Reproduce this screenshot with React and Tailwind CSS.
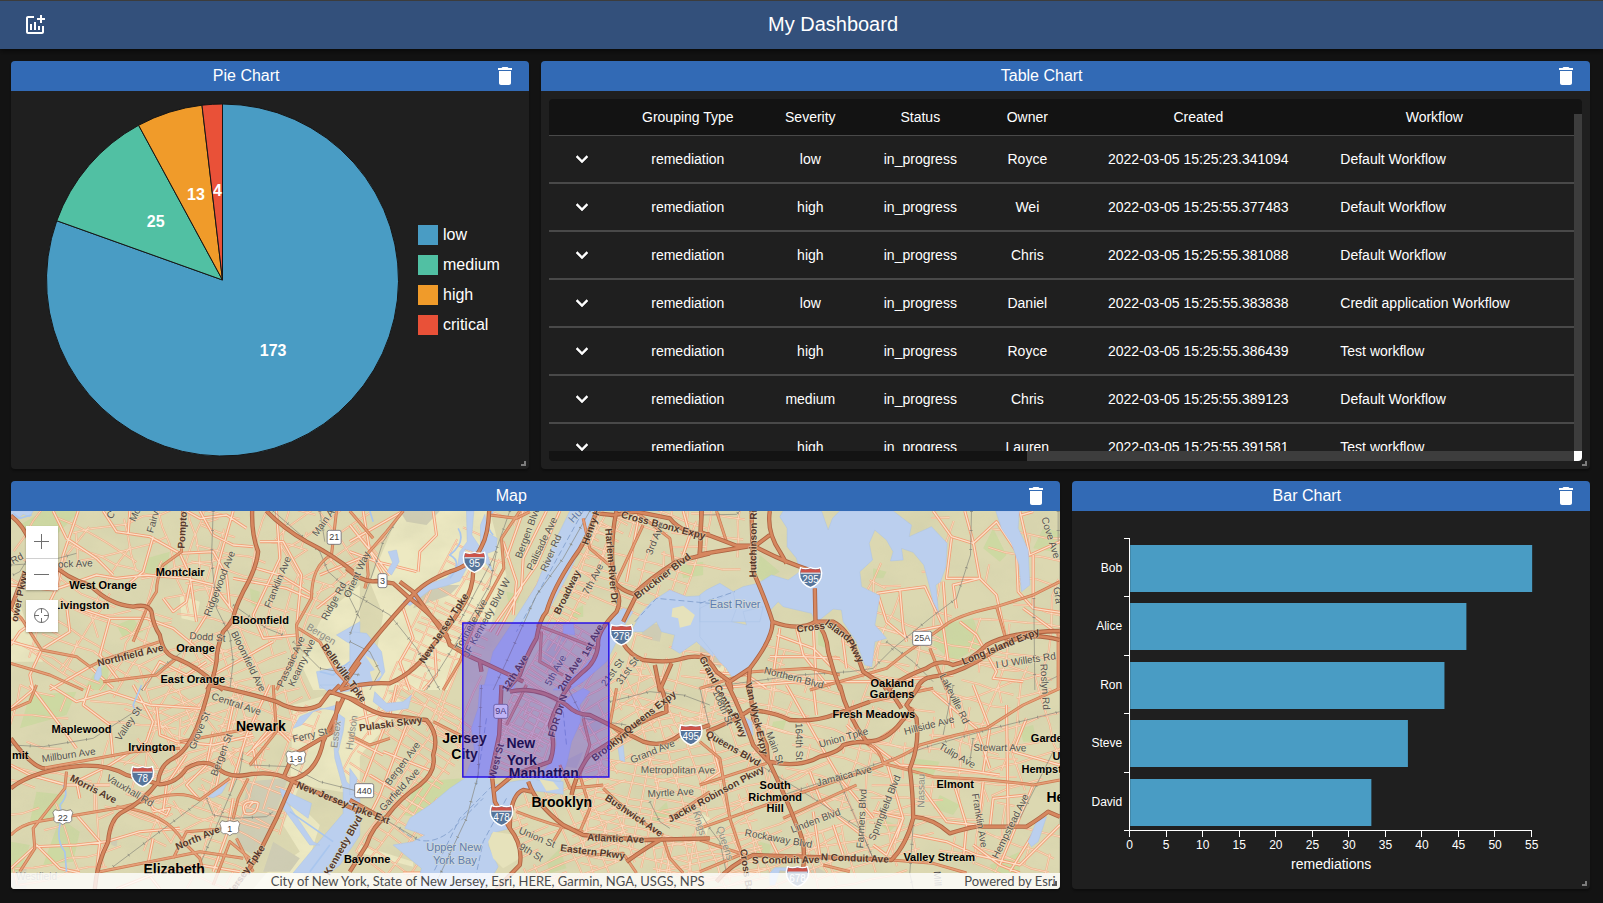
import React from "react";
import { MdAddchart, MdDelete } from "react-icons/md";

/* ---------- shared panel ---------- */

function Panel({ title, className, children, darkHandle }) {
  return (
    <section className={`relative flex min-w-0 flex-col overflow-hidden rounded bg-[#1f1f1f] text-white shadow-[0_2px_2px_rgba(0,0,0,0.3)] ${className || ""}`}>
      <header className="flex h-[30px] items-center bg-[#326ab5]">
        <h2 className="flex-1 text-center text-base leading-6">{title}</h2>
        <button type="button" aria-label={`Delete ${title}`} className="flex w-12 justify-center">
          <MdDelete size={24} />
        </button>
      </header>
      <div className="relative h-[378px]">{children}</div>
      <span
        className={`absolute right-[3px] bottom-[3px] h-[5px] w-[5px] border-r-2 border-b-2 ${darkHandle ? "border-[#5a5a5a]" : "border-[#7c7c7c]"}`}
      />
    </section>
  );
}

/* ---------- pie ---------- */

const SLICES = [
  { name: "low", value: 173, color: "#499cc4", swatch: "bg-[#499cc4]" },
  { name: "medium", value: 25, color: "#51c0a3", swatch: "bg-[#51c0a3]" },
  { name: "high", value: 13, color: "#f09b2a", swatch: "bg-[#f09b2a]" },
  { name: "critical", value: 4, color: "#e95138", swatch: "bg-[#e95138]" },
];

function PieChart() {
  const total = SLICES.reduce((s, d) => s + d.value, 0);
  const r = 176;
  let acc = 0;
  const arcs = SLICES.map((s) => {
    const a0 = (acc / total) * Math.PI * 2;
    acc += s.value;
    const a1 = (acc / total) * Math.PI * 2;
    const mid = (a0 + a1) / 2;
    const pt = (a, k) => [176.5 + Math.sin(a) * k, 177 - Math.cos(a) * k];
    const [x0, y0] = pt(a0, r);
    const [x1, y1] = pt(a1, r);
    const [tx, ty] = pt(mid, r / 2);
    return { ...s, d: `M176.5 177L${x0} ${y0}A${r} ${r} 0 ${a1 - a0 > Math.PI ? 1 : 0} 1 ${x1} ${y1}Z`, tx, ty };
  });
  return (
    <div className="flex h-full items-center gap-[18px] pl-[35px]">
      <svg viewBox="0 0 354 354" className="h-[354px] w-[354px] shrink-0" role="img" aria-label="Severity pie chart">
        {arcs.map((a) => (
          <path key={a.name} d={a.d} fill={a.color} stroke="#161616" strokeWidth="1" />
        ))}
        {arcs.map((a) => (
          <text key={a.name} x={a.tx} y={a.ty + 4} textAnchor="middle" className="fill-white text-base font-bold">
            {a.value}
          </text>
        ))}
      </svg>
      <ul className="flex flex-col gap-2.5">
        {SLICES.map((s) => (
          <li key={s.name} className="flex h-5 items-center gap-[5px] text-base leading-5">
            <span className={`h-5 w-5 ${s.swatch}`} />
            {s.name}
          </li>
        ))}
      </ul>
    </div>
  );
}

/* ---------- table ---------- */

const ROWS = [
  ["low", "Royce", "2022-03-05 15:25:23.341094", "Default Workflow"],
  ["high", "Wei", "2022-03-05 15:25:55.377483", "Default Workflow"],
  ["high", "Chris", "2022-03-05 15:25:55.381088", "Default Workflow"],
  ["low", "Daniel", "2022-03-05 15:25:55.383838", "Credit application Workflow"],
  ["high", "Royce", "2022-03-05 15:25:55.386439", "Test workflow"],
  ["medium", "Chris", "2022-03-05 15:25:55.389123", "Default Workflow"],
  ["high", "Lauren", "2022-03-05 15:25:55.391581", "Test workflow"],
];

function ChevronDown() {
  return (
    <svg width="24" height="24" viewBox="0 0 24 24" fill="currentColor" stroke="currentColor" strokeWidth="0.5">
      <path d="M16.59 8.590L12 13.170 7.410 8.590 6 10l6 6 6-6z" />
    </svg>
  );
}

function TableChart() {
  return (
    <div className="h-full p-2">
      <div className="flex h-full flex-col overflow-hidden rounded">
        <div className="flex min-h-0 flex-1">
          <div className="min-w-0 flex-1 overflow-hidden">
            <table className="w-full table-fixed border-separate border-spacing-0 text-center text-sm leading-5">
              <colgroup>
                <col className="w-[66px]" />
                <col className="w-[145px]" />
                <col className="w-[100px]" />
                <col className="w-[120px]" />
                <col className="w-[94px]" />
                <col className="w-[248px]" />
                <col className="w-[224px]" />
                <col />
              </colgroup>
              <thead>
                <tr className="h-[37px] bg-[#131313]">
                  {["", "Grouping Type", "Severity", "Status", "Owner", "Created", "Workflow", ""].map((h, i) => (
                    <th key={i} className="border-b border-[#494949] p-0 font-normal">{h}</th>
                  ))}
                </tr>
              </thead>
              <tbody>
                {ROWS.map(([sev, owner, created, wf]) => (
                  <tr key={created} className="h-12 [&>td]:border-b-2 [&>td]:border-[#494949] [&>td]:p-0">
                    <td>
                      <button type="button" aria-label="Expand row" className="mx-auto block">
                        <ChevronDown />
                      </button>
                    </td>
                    <td>remediation</td>
                    <td>{sev}</td>
                    <td>in_progress</td>
                    <td>{owner}</td>
                    <td>{created}</td>
                    <td className="text-left"><span className="pl-[18px]">{wf}</span></td>
                    <td />
                  </tr>
                ))}
              </tbody>
            </table>
          </div>
          <div className="w-2 bg-[#131313] pt-[15px]">
            <div className="h-full bg-[#3d3d3d]" />
          </div>
        </div>
        <div className="flex h-2.5 bg-[#131313]">
          <div className="w-[478px]" />
          <div className="flex-1 bg-[#3d3d3d]" />
          <div className="w-2 bg-white" />
        </div>
      </div>
    </div>
  );
}

/* ---------- bars ---------- */

const BARS = [["Bob", 55], ["Alice", 46], ["Ron", 43], ["Steve", 38], ["David", 33]];

function BarChart() {
  const x0 = 58, y0 = 27, w = 402, step = 58.4;
  const ticks = Array.from({ length: 12 }, (_, i) => i * 5);
  return (
    <svg viewBox="0 0 518 378" className="block h-full w-full" role="img" aria-label="Remediations by owner">
      {BARS.map(([name, v], i) => (
        <g key={name}>
          <rect x={x0} y={Math.round(y0 + i * step + 7)} width={(v / 55) * w} height="47" fill="#499cc4" />
          <text x={x0 - 8} y={Math.round(y0 + i * step + 34)} textAnchor="end" className="fill-white text-xs">{name}</text>
        </g>
      ))}
      <g stroke="#ffffff" fill="none" strokeWidth="1" shapeRendering="crispEdges">
        <path d={`M${x0 - 0.5} ${y0}V${y0 + 293}`} />
        {[0, 1, 2, 3, 4, 5].map((i) => (
          <path key={i} d={`M${x0 - 6} ${Math.round(y0 + i * step) + 0.5}H${x0}`} />
        ))}
        <path d={`M${x0 - 1} ${y0 + 292.5}H${x0 + w}`} />
        {ticks.map((t) => (
          <path key={t} d={`M${Math.round(x0 + (t / 55) * w) - 0.5} ${y0 + 292}v7`} />
        ))}
      </g>
      {ticks.map((t) => (
        <text key={t} x={x0 - 0.5 + (t / 55) * w} y="338" textAnchor="middle" className="fill-white text-xs">{t}</text>
      ))}
      <text x={x0 + w / 2} y="358" textAnchor="middle" className="fill-white text-sm">remediations</text>
    </svg>
  );
}

/* ---------- map ---------- */

/* The map is stored as six sheets drawn at triple scale; ORIGIN places each one. */
const ORIGIN = { a: [-11, -36], b: [339, -36], c: [689, -36], d: [-11, 174], e: [339, 174], f: [689, 174] };

const LOWLAND = {
  b: ["M150 108H420L470 300L420 460L340 540L300 645H60L100 420L60 320Z", "M160 520L260 560L240 645H120Z"],
  a: ["M970 420L1080 330V645H940L900 560Z", "M33 300L90 480L130 560L33 560Z", "M540 360L600 380L590 440L545 430Z"],
  d: ["M880 60L1080 0V330L900 300L850 420L900 500L800 564L760 612L900 612L960 420L870 330Z"],
  e: ["M0 0H90L170 60L40 200L0 260Z", "M30 480L190 530L190 545L20 500Z"],
  f: ["M0 380L30 400L20 450L0 440Z"],
  c: ["M0 500L60 560L90 600L30 580L0 540Z"],
};

const PARKS = {
  a: ["M130 108H240L160 190L80 200L60 150Z", "M440 250L510 230L500 290L430 300Z", "M350 450L400 430L430 470L370 490Z", "M750 340L780 350L775 400L755 390Z", "M280 600L330 560L320 645H250Z"],
  b: ["M470 350L510 360L505 385L475 380Z", "M665 410L700 390L700 425L670 430Z", "M990 270L1060 260L1060 300L1000 310Z", "M820 400L850 390L830 430L810 430Z"],
  c: ["M180 240L240 290L190 320L170 300Z", "M880 160L920 240L900 260L850 220Z", "M355 470L370 460L380 520L355 510Z", "M1030 160L1080 170L1060 230L1000 220Z", "M520 280L560 290L550 310L520 310Z", "M720 450L820 430L850 510L760 560L700 510Z"],
  d: ["M90 30L230 20L200 90L60 130Z", "M110 320L200 330L170 400L90 410Z", "M180 400L240 440L220 530L130 540Z", "M33 470L90 480L60 560H33Z"],
  e: ["M200 290L340 280L220 400L160 390Z", "M590 530L630 490L650 550L600 564Z", "M900 400L950 350L960 390L920 410Z"],
  f: ["M640 220L720 230L700 270L640 270Z", "M720 330L780 360L760 390L700 370Z", "M960 130L1000 120L1010 170L970 170Z", "M540 400L590 420L570 440L540 420Z", "M180 470L215 480L200 530L165 510Z", "M870 540L960 500L960 564L880 564Z", "M220 110L260 105L250 135L215 130Z"],
};

const GRAYS = {
  d: ["M745 290L865 278L780 520L705 480Z", "M33 570L80 545V612H33Z", "M820 470L900 520L870 560L790 560Z", "M330 460L355 455L350 485L335 480Z"],
  b: ["M150 108H270L230 150L170 140Z", "M600 490L640 510L620 570L575 560Z", "M625 475L655 480L650 505L625 495Z", "M870 440L940 450L930 500L880 490Z", "M220 330L330 330L300 360L190 400Z"],
  e: ["M680 90L760 110L740 150L700 140Z", "M620 240L700 200L680 250Z"],
  c: ["M0 510L70 560L60 580L0 540Z"],
  f: ["M200 560L350 545L380 564H210Z"],
};

const WATER = {
  a: ["M33 108H100L90 125L70 118L55 130L33 120Z", "M1010 480L1080 440V520L1040 500Z", "M950 590L1080 560V620L1040 640L960 640Z", "M285 600L302 562L305 600L295 618L283 612Z"],
  b: [
    "M660 108H735L700 200L660 290L600 400L570 440L530 540L490 645H400L430 530L490 440L560 330L600 230Z",
    "M0 470L50 475L95 530L105 590L80 630L0 640Z",
    "M350 108H372L366 180L390 215L378 232L345 222L350 280L330 318L290 332L240 345L180 392L160 380L215 335L290 308L322 280L330 230L352 200Z",
    "M405 118L415 175L442 190L440 225L412 235L428 290L405 260L392 220L392 150Z",
    "M115 230L140 225L148 260L125 300L112 290L128 262Z",
    "M790 425L820 400L850 410L830 440L800 500L770 560L700 620L660 645H610L690 590L740 530L755 470Z",
    "M845 470L870 420L905 380L960 345L1010 365L1090 360V545L1040 500L990 535L965 520L975 480L935 470L920 440L880 470Z",
    "M640 450L670 445L675 480L640 475Z",
  ],
  c: [
    "M0 360L20 345L60 325L100 350L130 335L175 325L215 300L265 315L300 290L290 250L262 215L262 160L240 125L250 108H365L385 165L398 130L420 108H580L635 150L628 185L695 155L742 205L738 275L722 320L708 330L716 412L700 380L688 330L672 270L640 232L605 220L610 255L572 258L580 230L560 195L525 165L508 205L518 255L480 290L485 335L540 362L525 450L560 490L525 500L516 575L495 570L470 500L430 440L425 405L400 402L350 442L335 415L250 395L235 380L212 405L222 440L190 520L150 570L100 612L80 580L60 560L0 485Z",
    "M888 108H958L955 160L985 225L990 330L965 350L958 270L935 205L905 160Z",
    "M0 400L100 350L110 400L95 440L140 450L130 410L190 395L180 440H0Z",
  ],
  d: ["M1010 60L940 80L905 120L880 130L900 95L960 70L1000 75L1035 100L1030 140L1015 200L1040 290L1080 330V450L1020 540L990 564H880L970 455L1030 385L1030 310L1005 220L1000 150Z", "M960 0L1080 0L1075 15L990 25Z", "M840 310L935 355L925 400L850 345Z", "M625 335L685 290L665 325L640 338Z", "M860 350L940 470L960 480L930 480L850 370Z"],
  e: [
    "M390 0H458L446 150L425 260L432 300L500 288L560 280L640 290L640 328L560 318L520 320L492 350L480 430L425 445L415 480L445 545L405 612H200L215 550L130 480L190 470L225 450L165 430L180 400L240 360L300 310L345 280L375 200L365 130L385 70Z",
    "M665 30L700 10L720 20L690 60L692 110L665 170L652 230L632 290L560 285L600 235L620 180L615 120L632 60Z",
    "M75 20L110 55L160 50L185 30L175 70L110 80L70 50Z",
    "M0 250L22 280L15 325L0 330Z",
    "M805 190L820 180L825 230L810 225Z",
  ],
  f: ["M133 95L155 110L160 150L140 150L130 120Z", "M985 470L1010 410L1040 395L1015 470L995 485Z", "M210 564L225 548L285 548L290 560L240 556L225 600H210Z"],
};

const ISLES = {
  b: ["M968 400L1000 392L1035 420L1022 450L990 458L985 430L965 425Z", "M45 540L80 560L95 600L70 625L60 590L75 585Z"],
  e: ["M415 470L430 440L500 450L510 520L460 550L430 520Z", "M568 282L610 290L628 312L590 318Z"],
};

const STREAMS = {
  d: ["M190 300Q210 330 180 360Q190 390 180 420Q170 470 195 500L200 560", "M425 0L400 60L410 90", "M870 380L1000 470M930 560L990 480"],
  b: ["M325 160Q350 200 300 240Q340 260 300 310", "M430 108Q400 150 430 180", "M60 108L70 140"],
  a: ["M40 115L60 130L95 120", "M960 590L1000 600L1050 560"],
};

const RAILS = {
  a: ["M33 270L120 265L230 235", "M640 108L635 250L650 400L690 480L700 560L690 645", "M820 108L960 230L985 290L1030 330L1080 430", "M700 390L800 460L850 480", "M960 108L975 200", "M40 300L60 290L85 250", "M425 645L470 590L560 520", "M880 500L960 580L1080 600"],
  b: ["M720 108L640 250L560 360L470 560L430 645", "M0 350L120 420L200 520L270 645", "M160 108L100 200L60 320L0 480", "M440 230L420 330L340 470L230 645", "M480 108L430 250L330 440", "M0 500L60 530L90 590L60 645"],
  c: ["M815 108L812 240L770 370L690 430L580 520L520 580L450 590L300 600L0 640", "M1075 108V200M1002 370L1005 645", "M560 500L640 560L700 620", "M1040 620L1080 600", "M0 120L110 118L150 80"],
  d: ["M33 180L130 185L280 160L420 70", "M340 545L480 440L600 350", "M600 540L660 400L720 260L730 200", "M750 240L870 245L960 290L1080 320", "M620 340L640 390L700 400L800 395L820 380"],
  e: ["M250 612L350 400L385 270L395 0", "M100 400L200 460", "M780 50L900 20L1000 30L1080 60", "M650 0L700 100L830 120", "M900 350L930 410L960 430"],
  f: ["M0 10L30 130L60 160L180 240L340 340L480 430L520 520", "M250 330L520 240L700 180L880 130L1080 80", "M410 270L450 360L520 520", "M640 420L630 564L640 612", "M760 0L730 150", "M0 380L30 430L60 470L80 564", "M1060 200L960 400", "M820 160L810 230"],
};

const MINOR = {
  a: ["M33 330L160 345L290 300L350 310L440 300L560 310L640 330L700 410", "M235 108L190 240L170 340L130 420L60 470L33 510", "M310 108L350 170L450 185L540 235L570 300L590 440", "M390 108L385 175", "M600 108L640 180L700 210L760 215", "M460 185L430 290L370 340", "M540 235L640 230L680 300L690 400", "M130 520L210 470L200 390L240 400L330 430L440 430L520 460L640 560", "M33 500L125 525L90 600L100 645", "M160 108L200 190L290 250L340 300", "M490 370L520 410L560 380L570 330", "M770 280L840 300L940 360", "M780 200L850 200L905 300L890 460", "M830 108L840 250L760 420L790 490L890 480", "M640 600L820 500", "M560 108L600 130L680 120L740 160", "M620 560L560 600L480 560L430 645", "M700 108L660 250L620 420L570 500", "M150 645L270 575L340 640", "M700 310L860 340L930 370", "M960 300L1080 250M950 400L1050 320", "M330 430L300 540L360 620"],
  b: ["M0 150L120 300M0 230L80 260L200 290", "M250 108L260 180L210 230L205 290", "M160 108L0 200", "M40 108L60 230L100 300", "M460 200L500 320L490 420", "M520 108L470 250", "M590 108L520 250L515 340L440 480", "M630 108L560 270L420 470", "M160 400L190 490L150 560L180 645", "M255 520L260 600L220 645", "M1000 108L1020 180L1000 240", "M870 108L830 320"],
  c: ["M700 108L755 185L820 205L890 140L950 230L955 350L1000 400L1080 412", "M795 108L820 200L840 310L890 360L920 500", "M755 190L740 310L840 310L760 330L770 400", "M530 355L600 345L675 335L730 455L745 560", "M600 345L610 460L620 500M535 360L560 440L620 490", "M115 460L210 460M115 460V545L170 560M115 490L215 490", "M210 545L310 545L420 550M240 460L220 600M290 460L310 540L390 640M340 450L350 640M230 480L340 520L400 580", "M425 460L440 580M960 108L990 240L1080 200M1000 240V400M965 120L1000 110", "M780 440L830 480L890 590L880 610L970 620", "M730 320L740 450L640 470", "M970 400L1080 480", "M33 640L300 620L550 620L760 600M0 590L140 600L200 640"],
  d: ["M33 70L105 10M90 0L180 120L230 190M270 0L250 60L330 120L340 220", "M150 0L230 50L330 20L450 60L600 70", "M400 0L460 110L440 170L330 240L230 290L240 340", "M470 60L480 150L530 170L640 180L760 150", "M33 240L90 270L200 300L330 300", "M105 485L230 480L320 470L420 440L540 430", "M33 550L110 480L180 550L240 564", "M230 390L300 470L290 560M460 460L440 560L480 612", "M350 612L480 560L600 540L720 560", "M490 380L500 300L560 210", "M600 345L560 300L620 240L640 140", "M650 300L700 60M690 320L740 150L810 0M740 210L830 130L870 170", "M700 340L680 450L640 560M770 250L760 190L810 130", "M760 350Q720 350 735 385Q770 395 775 355Q760 345 748 365", "M460 380L510 370L500 390L460 370L440 330"],
  e: ["M0 110L100 80M30 0L60 150M140 0L120 90M110 110L40 290M170 120L90 330L60 390", "M100 200L250 260M60 270L160 330M0 160L100 210", "M160 564L400 564"],
  f: ["M30 150L60 260L0 300M260 0L350 160L420 280L520 400M340 0L350 90", "M330 260L360 340L420 400L500 460M440 120L560 230L610 400L590 460", "M700 20L830 130L870 250M740 0L760 130M820 0L870 130L850 260M600 120L540 160", "M520 180L600 240L760 250L900 270M660 300L740 410L830 420", "M760 290L800 420L790 530M850 290L835 420M920 60L925 420M1000 300L900 540", "M820 480L900 540L960 564M640 450L740 470L830 510L960 540L1080 420", "M520 380L610 400L560 510L520 480", "M870 430L880 340L980 330M930 560L1010 430M980 100L940 200L1080 240", "M200 440L240 520M340 380L360 510M400 420L430 510"],
};

const MEDIUM = {
  a: ["M548 108L545 230L490 270Q470 310 470 350L445 390L400 500", "M33 400L65 430L125 525L230 545L270 575L310 555L480 500", "M1010 108L995 240Q935 270 935 370L890 450L895 520L830 645", "M895 460L960 500L1010 590L1060 645", "M33 565L150 600L250 645", "M310 620L470 600L530 550"],
  b: ["M160 108L110 170L50 240L55 300L45 340", "M510 108L455 190L462 280L380 430L330 560L280 645", "M420 120L500 130L540 110", "M855 108L960 190L970 260", "M700 130L720 220L790 280", "M880 150L800 320", "M560 450L640 480L740 520", "M575 470L570 560L640 600", "M0 108L70 190"],
  c: ["M330 645L560 580L610 540L730 455Q770 420 890 395L1000 360L1080 320", "M890 395L920 500", "M0 640L160 590L330 580L420 600", "M50 108L80 200", "M1075 470V645", "M690 520L740 645"],
  d: ["M33 450Q60 420 110 410L350 370L430 350Q540 310 600 345L690 280", "M200 260L195 310L100 430L105 490L60 560", "M350 365Q500 380 550 470L600 520L610 560", "M130 250L400 200L540 190", "M540 170L700 140L750 130", "M300 560L600 500L730 520", "M700 400L715 340L745 280", "M640 600L690 470L750 520", "M110 0L90 50L33 75", "M520 520L560 440L690 430", "M710 460L760 560", "M820 0L830 140L750 240"],
  e: ["M0 150L60 180L120 160M250 110L370 170", "M500 380Q600 420 700 440", "M530 0L470 120M640 420L610 470", "M760 310Q850 400 940 450", "M650 490L720 510L820 505L860 564", "M700 100L720 180L690 270L720 370L690 440", "M940 460L960 520L1000 564", "M960 400L1080 320", "M800 10L780 120L830 160", "M630 240L660 310L760 300"],
  f: ["M500 175Q540 190 550 235L700 275Q850 280 1000 300L1080 285", "M550 235Q620 210 660 180Q760 150 860 130L970 60L1080 10", "M575 525L700 535L800 564", "M0 430L240 345L550 240", "M0 560L120 510M0 465L150 515", "M0 170L60 220L90 400L130 520", "M0 300L200 235", "M370 540L450 560M250 400L470 300", "M510 50L700 10"],
};

const MAJOR = {
  a: ["M33 122Q70 150 90 200L150 260Q200 310 270 330Q330 390 400 395Q445 385 455 410Q460 450 480 480Q490 540 530 550Q600 580 650 630L670 645", "M757 108Q755 180 775 230Q770 280 730 350Q705 400 700 430Q690 450 670 470Q650 520 650 560Q640 620 622 645", "M800 108Q850 160 920 200Q1000 240 1060 290", "M33 400L75 290", "M1080 560L1020 645"],
  b: ["M418 108Q415 180 395 215Q370 270 300 290Q220 320 180 370Q60 500 0 590", "M370 290Q370 340 340 390Q290 470 250 510Q200 590 120 625Q40 620 -30 645", "M-10 280Q40 325 80 318L130 325L180 370Q260 430 290 480L300 510L350 540Q440 580 520 620", "M150 320L190 350L300 500", "M740 108Q710 200 670 250Q610 340 590 410Q570 430 560 490Q530 540 510 600L470 645", "M800 108Q780 200 790 300Q790 340 860 360L820 440", "M790 330Q820 370 800 410Q740 470 745 510Q740 560 700 590L640 645", "M850 360Q900 310 980 260L1080 235", "M740 115L790 120L860 110L960 130Q1000 180 1080 178", "M1055 108L1050 240", "M820 505Q840 540 880 555Q960 565 1000 550Q1030 540 1080 550", "M915 570L930 645L965 565", "M390 560L395 590"],
  c: ["M0 238L170 210L210 180", "M0 170L110 212L160 212Q250 260 330 285", "M210 108Q200 170 240 230L260 265", "M5 108L0 240", "M155 108L160 290Q200 380 218 440Q220 490 150 580L145 645", "M345 340L347 440Q300 470 218 440", "M347 440L400 440Q440 460 465 520L490 590L520 610Q550 620 560 645", "M347 440Q380 470 385 530Q400 590 422 645", "M570 640Q600 610 680 580Q720 550 760 570Q810 560 860 510Q930 470 1080 468", "M650 645Q660 610 700 605Q760 600 830 560L930 500Q990 470 1080 495", "M0 540Q30 555 50 590L90 620L150 580", "M90 620L95 645"],
  d: ["M33 310Q100 255 250 242Q330 240 380 270L480 298Q530 295 560 250Q610 220 650 245Q680 280 740 270Q820 255 870 285Q950 270 970 170L1030 40", "M1000 20L1020 0", "M630 0Q610 80 590 130Q560 200 520 220Q480 240 475 290Q430 350 370 380Q330 400 325 470Q290 540 285 612", "M880 285L830 400L770 520L730 575L700 612", "M33 160Q100 250 135 250", "M630 0Q730 20 830 50Q900 90 960 60L990 20L1080 50", "M870 285L1080 380", "M850 280L880 210L1000 140L1015 50"],
  e: ["M0 40Q80 90 110 90L230 105Q270 150 250 210Q260 260 210 300Q150 340 110 395Q70 420 50 480L0 560", "M0 345L100 400", "M455 0L448 150L425 260L435 350L480 430Q520 480 510 540L440 612", "M480 430Q480 330 520 315L545 320", "M660 0Q620 50 600 120Q620 180 600 230L490 270L430 320", "M480 20Q560 0 650 60Q680 90 720 90Q800 130 880 170Q940 190 990 150L1080 120", "M535 290Q560 360 640 420L700 450L880 465L1080 460", "M665 330Q680 260 720 210L800 160Q860 110 950 80Q950 40 930 0", "M830 530Q900 480 940 460"],
  f: ["M20 140Q100 110 150 75Q220 80 270 105Q350 110 400 90L510 50", "M80 -10Q130 90 160 180L210 235Q260 340 290 420Q320 470 310 550", "M150 0L160 100L200 180L205 230", "M420 0Q440 90 500 170Q560 170 605 110L640 70", "M205 230Q300 250 360 215Q420 200 430 180Q480 165 510 175", "M560 0L605 70M660 0L620 60L650 100Q660 180 630 250Q640 330 640 400Q620 480 575 525L480 520L310 515L160 510Q90 540 50 590", "M640 395Q700 400 750 445Q800 430 830 425L980 425Q1020 400 1045 380L1080 395"],
};

const FERRY = {
  b: ["M800 500L920 370L1080 385", "M700 108L600 290L500 470"],
  c: ["M0 385L105 350"],
  e: ["M150 430Q220 500 300 440L400 340", "M430 300L330 400L250 564", "M470 340L400 470L380 564", "M410 100L380 300", "M640 80L650 180"],
};

/* Street grids: centre, extent, bearing, spacing */
const GRIDS = [
  [60, 90, 130, 150, 25, 26], [150, 60, 150, 120, -15, 22], [240, 60, 120, 140, 15, 17], [130, 150, 200, 90, 28, 22],
  [220, 190, 150, 130, -20, 13], [80, 250, 170, 120, 12, 24], [180, 260, 110, 110, -30, 16], [245, 250, 90, 130, 20, 10],
  [60, 330, 120, 80, -12, 24], [180, 330, 150, 90, 22, 16], [330, 30, 100, 80, -35, 16], [300, 110, 50, 80, 20, 20],
  [465, 60, 60, 150, 25, 12], [430, 160, 80, 130, 22, 9], [560, 70, 60, 150, 28, 8], [545, 180, 70, 130, 32, 5], [515, 230, 60, 80, 22, 6],
  [630, 50, 110, 110, 18, 10], [700, 30, 80, 80, 5, 14], [620, 210, 100, 100, -28, 9], [660, 170, 90, 80, 12, 10],
  [560, 320, 110, 110, -22, 8], [640, 310, 120, 120, 12, 8], [700, 250, 120, 110, -14, 11], [750, 180, 110, 90, 14, 14],
  [780, 320, 160, 110, -24, 14], [820, 240, 150, 110, 16, 15], [880, 130, 90, 90, 25, 20], [910, 60, 70, 110, 10, 26],
  [930, 190, 150, 110, 14, 18], [940, 290, 160, 110, 4, 15], [1010, 100, 90, 150, 12, 22], [870, 340, 140, 70, -16, 14],
  [1010, 230, 90, 120, -18, 17], [400, 240, 90, 110, 33, 9], [395, 320, 60, 90, 34, 9], [700, 350, 110, 60, -10, 8], [1010, 345, 80, 60, 20, 15],
];

function gridPath() {
  let seed = 20220305;
  const rnd = () => {
    seed = (seed * 1664525 + 1013904223) % 4294967296;
    return seed / 4294967296;
  };
  let d = "";
  GRIDS.forEach(([cx, cy, w, h, deg, gap]) => {
    const c = Math.cos((deg * Math.PI) / 180);
    const s = Math.sin((deg * Math.PI) / 180);
    const put = (u, v) => `${(cx + u * c - v * s).toFixed(1)} ${(cy + u * s + v * c).toFixed(1)}`;
    [[w, h, false], [h, w, true]].forEach(([len, across, flip]) => {
      const spacing = flip ? gap * 1.7 : gap;
      for (let o = -across / 2; o < across / 2; o += spacing * (0.7 + rnd() * 0.7)) {
        let drawing = false;
        let drift = o;
        for (let t = -len / 2; t <= len / 2; t += 18) {
          drift += (rnd() - 0.5) * gap * 0.35;
          if (rnd() < 0.15) { drawing = false; continue; }
          d += `${drawing ? "L" : "M"}${flip ? put(drift, t) : put(t, drift)}`;
          drawing = true;
        }
      }
    });
  });
  return d;
}
const GRID_D = gridPath();

function Sheets({ data, ...attrs }) {
  return (
    <g {...attrs}>
      {Object.entries(data).map(([k, paths]) => (
        <path key={k} d={paths.join("")} transform={`translate(${ORIGIN[k][0]} ${ORIGIN[k][1]}) scale(0.33333)`} />
      ))}
    </g>
  );
}

const LABEL_STYLE = {
  s: "fill-[#55524f] text-[10px]",
  h: "fill-[#54372b] text-[10px] font-bold",
  g: "fill-[#8c8c84] text-[10px]",
  w: "fill-[#5d7cb4] text-[11px]",
  c: "fill-black text-[11px] font-bold",
  C: "fill-black text-sm font-bold",
};

/* sheet, style, text, start point, end point */
const STREETS = [
  ["a", "s", "Rd", 35, 257, 65, 240], ["a", "s", "ock Ave", 175, 266, 277, 262], ["a", "s", "C", 322, 128, 340, 108], ["a", "s", "Mo", 395, 135, 412, 100],
  ["a", "s", "Fairv", 448, 172, 466, 108], ["a", "h", "Pompto", 542, 222, 549, 108], ["a", "s", "Ridgewood Ave", 618, 425, 696, 225],
  ["a", "s", "Franklin Ave", 798, 402, 865, 240], ["a", "s", "Main A", 942, 178, 995, 105], ["a", "s", "Ridge Rd", 970, 432, 1030, 322],
  ["a", "s", "Orient Way", 1038, 366, 1100, 230], ["a", "s", "Dodd St", 568, 480, 678, 488], ["a", "s", "Bloomfield Ave", 700, 462, 795, 655],
  ["a", "h", "Northfield Ave", 297, 562, 485, 516], ["a", "s", "Passaic Ave", 836, 638, 907, 480], ["a", "s", "Kearny Ave", 870, 635, 937, 490],
  ["a", "g", "Bergen", 922, 450, 1008, 502], ["a", "h", "Belleville Tpke", 978, 515, 1090, 670], ["a", "h", "ower Pkwy", 42, 437, 72, 290],
  ["b", "s", "Bergen Blvd", 503, 248, 560, 95], ["b", "s", "Palisade Ave", 535, 285, 613, 125], ["b", "s", "River Rd", 578, 288, 625, 178],
  ["b", "w", "Hu", 660, 138, 690, 105], ["b", "h", "Henry H", 705, 202, 740, 105], ["b", "h", "Harlem River Dr", 778, 165, 797, 382],
  ["b", "s", "7th Ave", 703, 357, 752, 265], ["b", "h", "Broadway", 620, 412, 680, 290], ["b", "h", "Cross Bronx Expy", 822, 118, 1060, 180],
  ["b", "s", "3rd Ave", 893, 240, 935, 140], ["b", "h", "Bruckner Blvd", 858, 362, 1015, 242], ["b", "h", "New Jersey Tpke", 215, 557, 345, 360],
  ["b", "s", "Tonnelle Ave", 318, 527, 405, 370], ["b", "s", "JF Kennedy Blvd W", 345, 542, 472, 310], ["b", "h", "12th Ave", 463, 643, 525, 543],
  ["b", "s", "5th Ave", 590, 630, 640, 540], ["b", "h", "2nd Ave", 630, 643, 687, 548], ["b", "h", "1st Ave", 702, 540, 750, 450],
  ["b", "s", "21st St", 757, 632, 815, 550], ["b", "s", "31st St", 802, 627, 860, 545],
  ["c", "h", "Hutchinson Ri", 157, 306, 159, 106], ["c", "w", "East River", 25, 386, 187, 386], ["c", "h", "Cross", 293, 460, 372, 450],
  ["c", "h", "Island", 380, 438, 450, 490], ["c", "h", "Pkwy", 450, 492, 486, 560], ["c", "s", "Northern Blvd", 190, 582, 375, 630],
  ["c", "s", "Cove Ave", 1035, 125, 1074, 250], ["c", "s", "Gra", 1072, 335, 1080, 385], ["c", "h", "Long Island Expy", 793, 556, 1010, 468],
  ["c", "s", "I U Willets Rd", 885, 568, 1070, 540], ["c", "s", "Roslyn Rd", 1033, 565, 1042, 705], ["c", "s", "Lakeville Rd", 728, 595, 803, 745],
  ["c", "h", "Grand Central", 10, 548, 100, 718], ["f", "h", "Pkwy", 105, 85, 135, 155], ["f", "h", "Van Wyck Expy", 148, -5, 197, 205],
  ["d", "s", "Central Ave", 635, 30, 785, 80], ["d", "s", "Grove St", 573, 192, 620, 80], ["d", "s", "Valley St", 348, 167, 420, 62],
  ["d", "s", "Millburn Ave", 122, 220, 290, 196], ["d", "s", "Bergen St", 638, 275, 688, 142], ["d", "s", "Ferry St", 875, 162, 985, 135],
  ["d", "g", "Essex", 1000, 190, 1012, 105], ["d", "g", "Hudson", 1045, 195, 1062, 90], ["d", "h", "Morris Ave", 213, 275, 350, 345],
  ["d", "s", "Vauxhall Rd", 325, 275, 458, 355], ["d", "h", "North Ave", 533, 482, 652, 432], ["d", "h", "New Jersey Tpke Ext", 897, 298, 1165, 405],
  ["d", "h", "Kennedy Blvd", 980, 565, 1077, 395], ["d", "h", "Jersey Tpke", 690, 622, 785, 485], ["d", "g", "Westfield", 37, 573, 183, 573],
  ["e", "h", "Pulaski Skwy", 32, 126, 212, 103], ["e", "s", "Bergen Ave", 106, 302, 207, 167], ["e", "s", "Garfield Ave", 88, 377, 207, 248],
  ["e", "h", "West St", 425, 277, 450, 180], ["e", "h", "FDR Dr N", 603, 152, 640, 32], ["e", "h", "Brooklyn", 728, 220, 830, 142],
  ["e", "h", "Queens Expy", 833, 132, 965, 28], ["e", "s", "Grand Ave", 840, 225, 975, 170], ["e", "s", "Metropolitan Ave", 867, 252, 1102, 254],
  ["e", "s", "Myrtle Ave", 888, 325, 1037, 317], ["e", "h", "Bushwick Ave", 772, 335, 935, 445], ["e", "h", "Jackie Robinson Pkwy", 960, 400, 1235, 250],
  ["e", "g", "Kings", 1040, 378, 1062, 450], ["e", "h", "Atlantic Ave", 715, 455, 880, 462], ["e", "h", "Eastern Pkwy", 638, 487, 820, 510],
  ["e", "s", "Union St", 508, 432, 617, 478], ["e", "s", "9th St", 508, 478, 582, 522],
  ["f", "s", "108th St", 50, 18, 92, 115], ["f", "h", "Queens Blvd", 25, 145, 177, 232], ["f", "s", "Main St", 208, 138, 246, 238],
  ["f", "s", "164th St", 299, 112, 301, 227], ["f", "s", "Union Tpke", 353, 178, 508, 134], ["f", "s", "Hillside Ave", 605, 140, 770, 98],
  ["f", "s", "Jamaica Ave", 350, 292, 515, 250], ["f", "s", "Tulip Ave", 718, 178, 828, 242], ["f", "s", "Stewart Ave", 815, 185, 985, 187],
  ["f", "s", "Farmers Blvd", 478, 490, 488, 312], ["f", "s", "Springfield Blvd", 510, 472, 595, 263], ["f", "g", "Nassau", 661, 370, 662, 265],
  ["f", "s", "Linden Blvd", 268, 435, 425, 375], ["f", "s", "Rockaway Blvd", 133, 440, 340, 478], ["f", "h", "S Conduit Ave", 158, 524, 358, 522],
  ["f", "h", "N Conduit Ave", 365, 514, 565, 521], ["f", "h", "Cross Bay", 133, 495, 153, 635], ["f", "g", "Queens", 60, 420, 95, 527],
  ["f", "s", "Franklin Ave", 828, 325, 855, 487], ["f", "s", "Hempstead Ave", 883, 517, 977, 328], ["f", "s", "Mill", 714, 558, 716, 604],
];

/* sheet, style, text, point, optional anchor */
const PLACES = [
  ["a", "c", "Montclair", 541, 292], ["a", "c", "West Orange", 310, 331], ["a", "c", "Livingston", 328, 391, "end"], ["a", "c", "Bloomfield", 782, 436],
  ["a", "c", "Orange", 587, 518], ["a", "c", "East Orange", 579, 612], ["d", "c", "Maplewood", 245, 133], ["d", "c", "mit", 86, 210, "end"],
  ["d", "c", "Irvington", 456, 187], ["d", "C", "Newark", 783, 123], ["d", "C", "Elizabeth", 523, 553], ["e", "C", "Jersey", 344, 158],
  ["e", "C", "City", 344, 207], ["e", "C", "New", 513, 173], ["e", "C", "York", 516, 224], ["e", "C", "Manhattan", 582, 264], ["e", "C", "Brooklyn", 636, 350],
  ["e", "c", "Bayonne", 52, 522], ["e", "w", "Upper New", 312, 487], ["e", "w", "York Bay", 315, 525], ["c", "c", "Oakland", 577, 625],
  ["f", "c", "Gardens", 577, 28], ["f", "c", "Fresh Meadows", 522, 88], ["f", "c", "South", 226, 300], ["f", "c", "Richmond", 226, 337],
  ["f", "c", "Hill", 226, 370], ["f", "c", "Elmont", 766, 297], ["f", "c", "Valley Stream", 718, 517], ["f", "c", "Garde", 993, 160, "start"],
  ["f", "c", "U", 1058, 213, "start"], ["f", "c", "Hempst", 965, 252, "start"], ["f", "C", "He", 1040, 335, "start"],
];

/* kind: i interstate, r state route, u US highway */
const SHIELDS = [
  ["b", "i", "95", 374, 262], ["b", "i", "278", 815, 480], ["c", "i", "295", 332, 308], ["d", "i", "78", 428, 275], ["e", "i", "478", 455, 392],
  ["e", "i", "495", 1023, 150], ["f", "i", "678", 293, 575], ["a", "r", "21", 1003, 187], ["b", "r", "3", 98, 317], ["c", "r", "25A", 667, 490],
  ["e", "r", "9A", 453, 79], ["e", "r", "440", 43, 317], ["d", "u", "22", 189, 395], ["d", "u", "1-9", 888, 219], ["d", "u", "1", 690, 428],
];

const at = (k, x, y) => [ORIGIN[k][0] + x / 3, ORIGIN[k][1] + y / 3];

function Shield({ kind, text }) {
  if (kind === "i") {
    return (
      <g>
        <path d="M-10-10Q-5-8 0-10Q5-8 10-10Q12-5 10.500 0Q8 7 0 10Q-8 7-10.500 0Q-12-5-10-10Z" fill="#56759b" stroke="#ffffff" strokeWidth="1.5" />
        <path d="M-9.500-9Q-5-7.500 0-9Q5-7.500 9.500-9L10-5H-10Z" fill="#cd5349" />
        <path d="M-10-4.500H10" stroke="#ffffff" strokeWidth="1" />
        <text y="5" textAnchor="middle" className="fill-white text-[10px]">{text}</text>
      </g>
    );
  }
  if (kind === "u") {
    return (
      <g>
        <path d="M-8-7Q-4-5 0-7Q4-5 8-7L10-4Q8 0 9 4Q7 7 3 6L0 8L-3 6Q-7 7-9 4Q-8 0-10-4Z" fill="#ffffff" stroke="#77736c" strokeWidth="0.8" />
        <text y="4" textAnchor="middle" className="fill-[#3c3c3c] text-[9px]">{text}</text>
      </g>
    );
  }
  const w = text.length === 3 ? 19 : text.length === 2 ? 14 : 9;
  return (
    <g>
      <rect x={-w / 2} y="-7" width={w} height="14" rx="2" fill="#ffffff" stroke="#66666e" strokeWidth="0.8" />
      <text y="3" textAnchor="middle" className="fill-[#3c3c3c] text-[9px]">{text}</text>
    </g>
  );
}

function MapDrawing() {
  return (
    <svg viewBox="0 0 1049 378" preserveAspectRatio="xMidYMid slice" className="block h-full w-full" role="img" aria-label="Map of New York City">
      <defs>
        <filter id="relief" x="0" y="0" width="100%" height="100%">
          <feTurbulence type="fractalNoise" baseFrequency="0.018 0.03" numOctaves="4" seed="7" />
          <feColorMatrix values="0 0 0 0 0.58  0 0 0 0 0.58  0 0 0 0 0.38  1.6 0 0 0 -0.62" />
        </filter>
      </defs>
      <rect width="1049" height="378" fill="#dcd8b1" />
      <Sheets data={LOWLAND} fill="#ede9c2" />
      <Sheets data={PARKS} fill="#cdd9a2" />
      <Sheets data={GRAYS} fill="#cfccb4" />
      <rect width="1049" height="378" filter="url(#relief)" opacity="0.4" />
      <path d={GRID_D} fill="none" stroke="#f4a680" strokeWidth="2" opacity="0.8" />
      <path d={GRID_D} fill="none" stroke="#fae0c6" strokeWidth="0.8" />
      <Sheets data={MINOR} fill="none" stroke="#f19c74" strokeWidth="9" strokeLinejoin="round" />
      <Sheets data={MINOR} fill="none" stroke="#fbe0c8" strokeWidth="4" strokeLinejoin="round" />
      <Sheets data={WATER} fill="#bbcfee" stroke="#a9c2e6" strokeWidth="1.500" />
      <Sheets data={ISLES} fill="#e6e2bb" />
      <Sheets data={STREAMS} fill="none" stroke="#a9c6ee" strokeWidth="5" />
      <Sheets data={FERRY} fill="none" stroke="#7f9dcb" strokeWidth="2.500" strokeDasharray="18 9" />
      <Sheets data={RAILS} fill="none" stroke="#85857a" strokeWidth="2" />
      <Sheets data={RAILS} fill="none" stroke="#85857a" strokeWidth="9" strokeDasharray="2 55" />
      <Sheets data={MEDIUM} fill="none" stroke="#cc7850" strokeWidth="9" strokeLinejoin="round" />
      <Sheets data={MEDIUM} fill="none" stroke="#e59f78" strokeWidth="5" strokeLinejoin="round" />
      <Sheets data={MAJOR} fill="none" stroke="#ad6342" strokeWidth="13" strokeLinejoin="round" />
      <Sheets data={MAJOR} fill="none" stroke="#d6875f" strokeWidth="8" strokeLinejoin="round" />
      <g stroke="#e6e2c0" strokeWidth="1.500" strokeOpacity="0.55" paintOrder="stroke" strokeLinejoin="round">
        {STREETS.map(([k, style, text, x1, y1, x2, y2], i) => {
          const [px, py] = at(k, (x1 + x2) / 2, (y1 + y2) / 2);
          const deg = (Math.atan2(y2 - y1, x2 - x1) * 180) / Math.PI;
          return (
            <text key={i} transform={`translate(${px} ${py}) rotate(${deg})`} y="4" textAnchor="middle" className={LABEL_STYLE[style]}>
              {text}
            </text>
          );
        })}
        {PLACES.map(([k, style, text, x, y, anchor], i) => {
          const [px, py] = at(k, x, y);
          return (
            <text key={i} x={px} y={py + (style === "C" ? 5 : 4)} textAnchor={anchor || "middle"} className={LABEL_STYLE[style]}>
              {text}
            </text>
          );
        })}
      </g>
      {SHIELDS.map(([k, kind, text, x, y]) => {
        const [px, py] = at(k, x, y);
        return (
          <g key={text} transform={`translate(${px} ${py})`}>
            <Shield kind={kind} text={text} />
          </g>
        );
      })}
      <rect x="452" y="112" width="146" height="154" fill="#5030e6" fillOpacity="0.36" stroke="#2812e6" strokeWidth="1.500" />
    </svg>
  );
}

function MapPanel() {
  const control = "flex h-8 w-8 items-center justify-center bg-white text-[#6e6e6e]";
  return (
    <>
      <MapDrawing />
      <div className="absolute top-[15px] left-[15px] flex flex-col gap-2.5">
        <div className="flex flex-col shadow-[0_1px_2px_rgba(0,0,0,0.3)]">
          <button type="button" aria-label="Zoom in" className={control}>
            <svg width="16" height="16" viewBox="0 0 16 16" stroke="currentColor" fill="none"><path d="M7.500 0v15M0 7.500h15" /></svg>
          </button>
          <button type="button" aria-label="Zoom out" className={`${control} border-t border-[#d0d0d0]`}>
            <svg width="16" height="16" viewBox="0 0 16 16" stroke="currentColor" fill="none"><path d="M0 7.500h15" /></svg>
          </button>
        </div>
        <button type="button" aria-label="Find my location" className={`${control} shadow-[0_1px_2px_rgba(0,0,0,0.3)]`}>
          <svg width="16" height="16" viewBox="0 0 16 16" stroke="currentColor" fill="none">
            <circle cx="7.500" cy="7.500" r="7" />
            <path d="M7.500 0v5M7.500 10v5M0 7.500h5M10 7.500h5" />
          </svg>
        </button>
      </div>
      <div className="absolute inset-x-0 bottom-0 flex h-4 items-center bg-white/80 pr-1 font-[Lato,sans-serif] text-[13px] leading-4 text-[#4c4c4c]">
        <span className="flex-1 text-center">City of New York, State of New Jersey, Esri, HERE, Garmin, NGA, USGS, NPS</span>
        <span>Powered by <a href="#esri">Esri</a></span>
      </div>
    </>
  );
}

export default function App() {
  return (
    <div className="min-h-screen bg-[#131313] font-['Liberation_Sans',Arial,sans-serif]">
      <header className="flex h-[49px] items-center gap-1 border-t border-[#3c3c3c] bg-[#33507b] pl-[11px] text-white shadow-[0_2px_6px_rgba(0,0,0,0.6)]">
        <button type="button" aria-label="Add chart" className="flex h-12 w-12 items-center justify-center">
          <MdAddchart size={24} />
        </button>
        <h1 className="flex-1 pb-0.5 text-center text-xl leading-8">My Dashboard</h1>
      </header>
      <main className="grid grid-cols-3 gap-3 pt-3 pr-[13px] pb-3.5 pl-[11px]">
        <Panel title="Pie Chart"><PieChart /></Panel>
        <Panel title="Table Chart" className="col-span-2"><TableChart /></Panel>
        <Panel title="Map" className="col-span-2" darkHandle><MapPanel /></Panel>
        <Panel title="Bar Chart"><BarChart /></Panel>
      </main>
    </div>
  );
}
